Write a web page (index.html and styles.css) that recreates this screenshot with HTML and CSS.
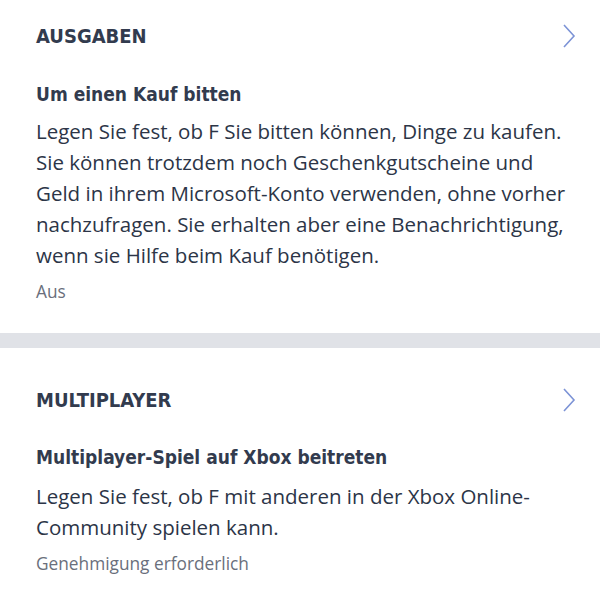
FILE: index.html
```html
<!DOCTYPE html>
<html lang="de">

<head>
    <meta charset="UTF-8">
    <meta name="viewport" content="width=device-width, initial-scale=1.0">
    <title>Einstellungen</title>
    <link rel="stylesheet" href="styles.css">
</head>

<body>
    <section class="section">
        <div class="section-head">
            <h2>AUSGABEN</h2>
            <svg class="chevron" width="14" height="24" viewBox="0 0 14 24">
                <path d="M2 1 L12 12 L2 23" />
            </svg>
        </div>
        <h3>Um einen Kauf bitten</h3>
        <p class="desc">Legen Sie fest, ob F Sie bitten können, Dinge zu kaufen. Sie können trotzdem noch Geschenkgutscheine und Geld in ihrem Microsoft-Konto verwenden, ohne vorher nachzufragen. Sie erhalten aber eine Benachrichtigung, wenn sie Hilfe beim Kauf benötigen.</p>
        <div class="state">Aus</div>
    </section>

    <div class="divider"></div>

    <section class="section section-next">
        <div class="section-head">
            <h2>MULTIPLAYER</h2>
            <svg class="chevron" width="14" height="24" viewBox="0 0 14 24">
                <path d="M2 1 L12 12 L2 23" />
            </svg>
        </div>
        <h3>Multiplayer-Spiel auf Xbox beitreten</h3>
        <p class="desc">Legen Sie fest, ob F mit anderen in der Xbox Online-Community spielen kann.</p>
        <div class="state">Genehmigung erforderlich</div>
    </section>
</body>

</html>
```

FILE: styles.css
```css
:root {
    --text-color: #2c3547;
    --muted-color: #6a6f7c;
    --accent-color: #7c93d6;
}

body {
    font-family: 'Open Sans', 'Noto Sans', sans-serif;
    margin: 0;
    background: #fff;
    color: var(--text-color);
}

.section {
    padding: 24px 24px 30px 36px;
}

.section-next {
    padding-top: 40px;
}

.section-head {
    display: flex;
    justify-content: space-between;
    align-items: center;
}

h2 {
    margin: 0;
    font-family: 'DejaVu Sans Condensed', 'DejaVu Sans', sans-serif;
    font-size: 20px;
    font-weight: bold;
    color: #323b4e;
}

.chevron {
    fill: none;
    stroke: var(--accent-color);
    stroke-width: 1.6;
}

h3 {
    margin: 35px 0 0;
    font-family: 'DejaVu Sans Condensed', 'DejaVu Sans', sans-serif;
    font-size: 19px;
    font-weight: bold;
    color: #323b4e;
}

.section-next h3 {
    margin-top: 34px;
}

.desc {
    margin: 11px 6px 0 0;
    font-size: 20.5px;
    line-height: 31px;
}

.section-next .desc {
    margin-top: 13px;
}

.state {
    margin-top: 9px;
    font-size: 17.3px;
    color: var(--muted-color);
}

.divider {
    height: 15px;
    background: #e0e2e7;
}
```
